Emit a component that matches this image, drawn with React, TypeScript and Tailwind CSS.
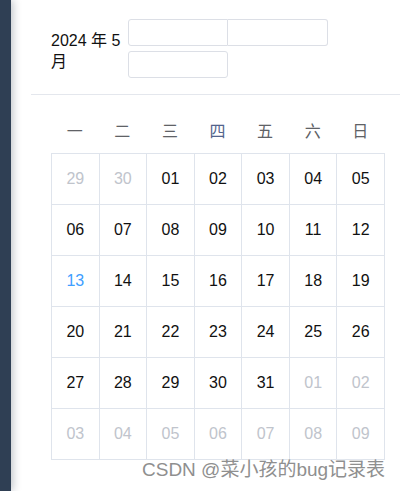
import React from "react"

const weekDays = ["一", "二", "三", "四", "五", "六", "日"]

interface Day {
  label: string
  muted?: boolean
  today?: boolean
}

const pad = (n: number) => (n < 10 ? "0" + n : String(n))

// 2024年5月，周一开始
const buildDays = (): Day[] => {
  const days: Day[] = [{ label: "29", muted: true }, { label: "30", muted: true }]
  for (let i = 1; i <= 31; i++) days.push({ label: pad(i), today: i === 13 })
  for (let i = 1; i <= 9; i++) days.push({ label: pad(i), muted: true })
  return days
}

export default function App() {
  const days = buildDays()

  return (
    <div
      className="relative flex w-[400px] h-[491px] bg-white overflow-hidden"
      style={{ fontFamily: '"Liberation Sans", Arial, "Noto Sans CJK SC", sans-serif' }}
    >
      {/* 左侧菜单栏 */}
      <div className="w-[11px] shrink-0 bg-[#2f3f54] shadow-[2px_0_8px_rgba(0,21,41,0.25)] z-10" />

      <div className="flex-1 pl-[20px]">
        {/* 日期选择 */}
        <div className="flex items-center pt-[19px] pl-[20px]">
          <div className="w-[77px] text-[16px] leading-[21px] text-[#111] pt-[5px]">2024 年 5 月</div>
          <div className="flex flex-col gap-[5px]">
            <div className="flex">
              <div className="w-[100px] h-[27px] border border-[#dcdfe6] rounded-l-[3px]" />
              <div className="w-[100px] h-[27px] border border-l-0 border-[#dcdfe6] rounded-r-[3px]" />
            </div>
            <div className="w-[100px] h-[27px] border border-[#dcdfe6] rounded-[3px]" />
          </div>
        </div>

        <div className="mt-[16px] h-px bg-[#e4e7ed]" />

        {/* 日历 */}
        <div className="pl-[20px] pt-[26px]">
          <div className="grid grid-cols-7 w-[333px] pb-[10px]">
            {weekDays.map((d) => (
              <div
                key={d}
                className={`text-center text-[16px] leading-[22px] ${d === "四" ? "text-[#52648c]" : "text-[#606266]"}`}
              >
                {d}
              </div>
            ))}
          </div>
          <div className="grid grid-cols-7 w-[334px] border-t border-l border-[#dfe4ec]">
            {days.map((day, i) => (
              <div
                key={i}
                className={`h-[51px] flex items-center justify-center border-r border-b border-[#dfe4ec] text-[16px] ${
                  day.muted ? "text-[#c0c4cc]" : day.today ? "text-[#409eff]" : "text-[#111]"
                }`}
              >
                {day.label}
              </div>
            ))}
          </div>
        </div>
      </div>

      {/* 水印 */}
      <div className="absolute left-[142px] top-[459px] text-[19px] leading-[22px] text-[#8f8f8f] whitespace-nowrap [text-shadow:0_0_2px_#fff]">
        CSDN @菜小孩的bug记录表
      </div>
    </div>
  )
}
